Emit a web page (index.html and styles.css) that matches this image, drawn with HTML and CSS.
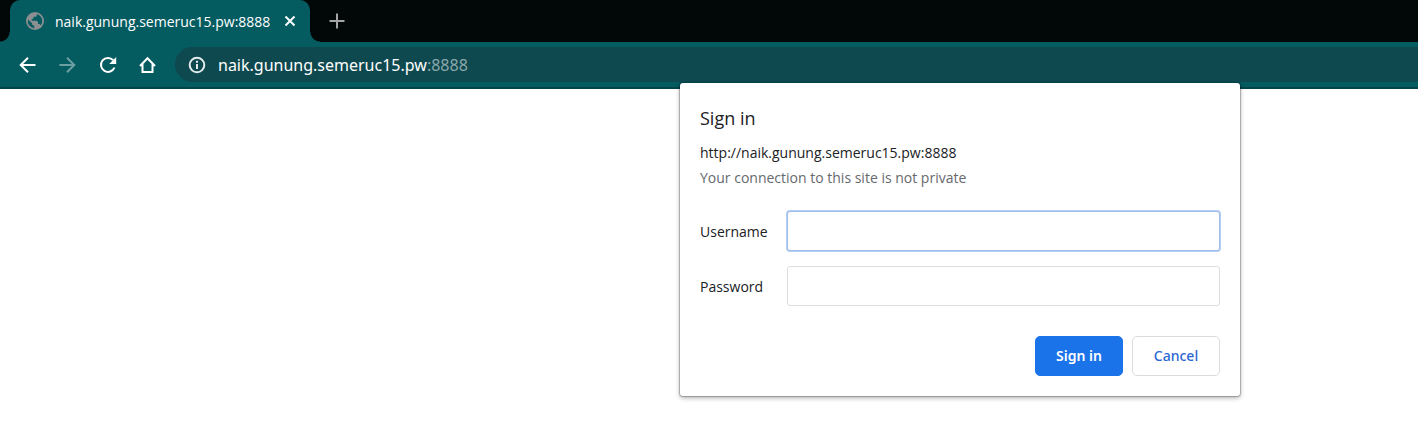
FILE: index.html
```html
<!DOCTYPE html>
<html lang="en">
<head>
<meta charset="utf-8">
<title>naik.gunung.semeruc15.pw:8888</title>
<link rel="stylesheet" href="styles.css">
</head>
<body>
<div class="browser">
  <header class="chrome">
    <div class="tabstrip">
      <div class="tab">
        <svg class="favicon" viewBox="0 0 18 18" aria-hidden="true">
          <circle cx="9" cy="9" r="9" fill="#8b8f91"/>
          <path d="M2 7.500 6 11.300v1.200L8.200 14v2.300A7.300 7.300 0 0 1 2 7.500z" fill="#045b60"/>
          <path d="M10.800 2v1.300a1.500 1.500 0 0 1-1.500 1.500H7.500v1.700l-1.800.700v1.600h5l1.300 1.200v2h1.500l1.300 1.300A7.200 7.200 0 0 0 10.800 2z" fill="#045b60"/>
        </svg>
        <span class="tab-title">naik.gunung.semeruc15.pw:8888</span>
        <button class="icon-button close" type="button" aria-label="Close tab">
          <svg width="12" height="12" viewBox="0 0 12 12"><path d="M1.500 1.500l9 9M10.500 1.500l-9 9" fill="none" stroke="#fff" stroke-width="2"/></svg>
        </button>
      </div>
      <button class="icon-button new-tab" type="button" aria-label="New tab">
        <svg width="16" height="16" viewBox="0 0 16 16"><path d="M8 .5v15M.5 8h15" fill="none" stroke="#a2a4a5" stroke-width="2"/></svg>
      </button>
    </div>
    <div class="toolbar">
      <nav class="nav">
        <button class="icon-button" type="button" aria-label="Back">
          <svg width="20" height="20" viewBox="0 0 20 20"><path d="M17.500 10H3M10 2.700 2.700 10l7.300 7.300" fill="none" stroke="#fff" stroke-width="2"/></svg>
        </button>
        <button class="icon-button" type="button" aria-label="Forward" disabled>
          <svg width="20" height="20" viewBox="0 0 20 20"><path d="M1.500 10H16M9 2.700l7.300 7.300L9 17.300" fill="none" stroke="#6b9fa2" stroke-width="2"/></svg>
        </button>
        <button class="icon-button" type="button" aria-label="Reload">
          <svg width="20" height="20" viewBox="0 0 20 20"><path d="M16.500 12.500A7 7 0 1 1 15.200 5.200" fill="none" stroke="#fff" stroke-width="2"/><path d="M18.200 2v7h-7z" fill="#fff"/></svg>
        </button>
        <button class="icon-button" type="button" aria-label="Home">
          <svg width="20" height="20" viewBox="0 0 20 20"><path d="M2 11 9.500 3.300 17 11M4.500 9v8h10V9" fill="none" stroke="#fff" stroke-width="2"/></svg>
        </button>
      </nav>
      <div class="omnibox">
        <svg width="18" height="18" viewBox="0 0 18 18" aria-hidden="true"><circle cx="9" cy="9" r="7.300" fill="none" stroke="#e3ebec" stroke-width="2"/><path d="M9 8v5M9 4.800v2" stroke="#e3ebec" stroke-width="2"/></svg>
        <span class="address">naik.gunung.semeruc15.pw<span class="port">:8888</span></span>
      </div>
    </div>
  </header>
  <main class="page"></main>
  <form class="dialog" role="dialog" aria-labelledby="dialog-title">
    <h1 class="dialog-title" id="dialog-title">Sign in</h1>
    <p class="origin">http://naik.gunung.semeruc15.pw:8888</p>
    <p class="notice">Your connection to this site is not private</p>
    <div class="fields">
      <label for="username">Username</label>
      <input class="field active" id="username" type="text">
      <label for="password">Password</label>
      <input class="field" id="password" type="password">
    </div>
    <div class="actions">
      <button class="button primary" type="button">Sign in</button>
      <button class="button" type="button">Cancel</button>
    </div>
  </form>
</div>
</body>
</html>
```
FILE: styles.css
```css
* {
  box-sizing: border-box;
}

body {
  margin: 0;
  background: #fff;
  color: #202124;
  font-family: "Open Sans", "Noto Sans", sans-serif;
  font-size: 14px;
}

.browser {
  position: relative;
  display: flex;
  flex-direction: column;
  min-height: 100vh;
}

.page {
  flex: 1;
}

.tabstrip {
  display: flex;
  align-items: stretch;
  height: 42px;
  padding-left: 10px;
  background: #020708;
}

.tab {
  position: relative;
  display: flex;
  align-items: center;
  width: 300px;
  padding: 0 14px 0 16px;
  border-radius: 10px 10px 0 0;
  background: #045b60;
  color: #fff;
}

.tab::before,
.tab::after {
  content: "";
  position: absolute;
  bottom: 0;
  width: 10px;
  height: 10px;
}

.tab::before {
  right: 100%;
  background: radial-gradient(circle at 0 0, #020708 9px, #045b60 10px);
}

.tab::after {
  left: 100%;
  background: radial-gradient(circle at 100% 0, #020708 9px, #045b60 10px);
}

.favicon {
  width: 18px;
  height: 18px;
  margin-right: 11px;
}

.tab-title {
  flex: 1;
  white-space: nowrap;
}

.icon-button {
  display: flex;
  align-items: center;
  justify-content: center;
  padding: 0;
  border: 0;
  background: none;
}

.new-tab {
  width: 54px;
}

.toolbar {
  display: flex;
  align-items: center;
  height: 47px;
  padding-left: 18px;
  border-bottom: 2px solid #05434a;
  background: #045b60;
}

.nav {
  display: flex;
  gap: 20px;
  margin-right: 17px;
}

.omnibox {
  display: flex;
  flex: 1;
  align-items: center;
  gap: 12px;
  height: 35px;
  padding-left: 13px;
  border-radius: 18px 0 0 18px;
  background: #0f4950;
  color: #fff;
  font-family: "Noto Sans", "Open Sans", sans-serif;
  font-size: 16px;
}

.port {
  color: #8ba7aa;
}

.dialog {
  position: absolute;
  top: 83px;
  left: 680px;
  width: 560px;
  padding: 20px;
  border-radius: 3px;
  background: #fff;
  box-shadow: 0 0 1px 1px rgba(0, 0, 0, 0.25), 0 2px 5px rgba(0, 0, 0, 0.3);
}

.dialog-title {
  margin: 0 0 7px;
  font-size: 18px;
  font-weight: 400;
  line-height: 30px;
}

.origin,
.notice {
  margin: 0;
  line-height: 25px;
}

.notice {
  color: #66696d;
}

.fields {
  display: grid;
  grid-template-columns: 87px 1fr;
  align-items: center;
  row-gap: 15px;
  margin: 21px 0 30px;
}

.field {
  width: 100%;
  height: 40px;
  padding: 0 10px;
  border: 1px solid #dcdee1;
  border-radius: 3px;
  background: #fff;
  font: inherit;
  outline: none;
}

.field.active {
  border-color: #a0bcea;
  box-shadow: 0 0 0 1px #b4cdf3;
}

.actions {
  display: flex;
  justify-content: flex-end;
  gap: 9px;
}

.button {
  width: 88px;
  height: 40px;
  padding: 0 0 2px;
  border: 1px solid #dadce0;
  border-radius: 5px;
  background: #fff;
  color: #2b67d2;
  font-family: "Noto Sans", "Open Sans", sans-serif;
  font-size: 14px;
  font-weight: 500;
}

.button.primary {
  border-color: #1a73e8;
  background: #1a73e8;
  color: #fff;
  font-weight: 600;
}
```
